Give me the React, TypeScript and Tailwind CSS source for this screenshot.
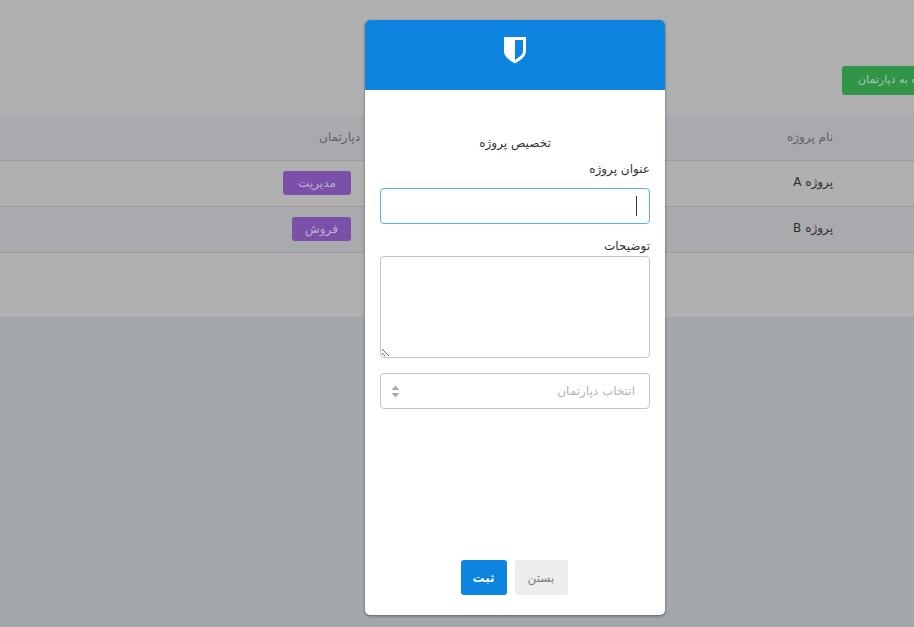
export default function App() {
  const rows = [
    { name: "پروژه A", dept: "مدیریت", bg: "bg-[#b0b0b0]", pad: "w-[68px]" },
    { name: "پروژه B", dept: "فروش", bg: "bg-[#a9aaae]", pad: "w-[59px]" },
  ];
  return (
    <div dir="rtl" className="relative h-[627px] w-[914px] overflow-hidden bg-[#a3a6aa] font-['DejaVu_Sans',sans-serif] text-[12px]">
      <div dir="ltr" className="h-[317px] bg-[#b0b0b0]">
        <div className="h-[115px] pt-[66px]">
          <button className="ml-[842px] flex h-[29px] w-max items-center whitespace-nowrap rounded-[3px] bg-[#319447] px-4 text-[11px] text-[#a5c9ad]">
            افزودن پروژه به دپارتمان
          </button>
        </div>
        <div dir="rtl">
          <div className="grid h-[46px] grid-cols-[473px_1fr] items-center border-b border-[#9c9c9c] bg-[#a9aaae] pb-[2px] text-[#5f5f62]">
            <div className="pr-[81px]">نام پروژه</div>
            <div className="pr-[81px]">دپارتمان</div>
          </div>
          {rows.map((r) => (
            <div key={r.name} className={`grid h-[46px] grid-cols-[473px_1fr] items-center border-b border-[#9c9c9c] ${r.bg} text-[#2e2e2e]`}>
              <div className="pb-[3px] pr-[81px]">{r.name}</div>
              <div className="pb-[2px] pr-[90px]">
                <span className={`inline-flex h-[24px] items-center justify-center rounded-[3px] bg-[#7b50a8] text-[12px] text-[#bcaed0] ${r.pad}`}>{r.dept}</span>
              </div>
            </div>
          ))}
        </div>
      </div>

      <div className="absolute inset-0 flex justify-center pl-[116px] pt-[20px]">
        <div className="flex h-[595px] w-[300px] flex-col overflow-hidden rounded-[5px] bg-white shadow-[0_1px_3px_rgba(0,0,0,0.45)]">
          <div className="flex h-[70px] shrink-0 justify-center bg-[#0d84e0] pt-[17px]">
            <svg width="24" height="27" viewBox="0 0 24 27">
              <path fillRule="evenodd" fill="#ffffff" d="M1 0H23V14.5C23 20 16 24 12 26.5C8 24 1 20 1 14.5ZM12 3V23C15 21 20 18 20 14.5V3Z" />
            </svg>
          </div>
          <div className="flex flex-1 flex-col px-[15px] text-[#333333]">
            <div className="mt-[45px] text-center leading-[16px]">تخصیص پروژه</div>
            <div className="mt-[10px] leading-[16px]">عنوان پروژه</div>
            <div className="relative mt-[11px]">
              <input className="block h-[36px] w-full rounded-[4px] border border-[#5aaef0] bg-white px-[13px] outline-none" />
              <span className="absolute right-[13px] top-[8px] h-[20px] w-px bg-[#333333]" />
            </div>
            <div className="mt-[14px] leading-[16px]">توضیحات</div>
            <textarea className="mt-[2px] block h-[102px] w-full rounded-[4px] border border-[#c4c4c4] bg-white outline-none" />
            <div className="mt-[15px] flex h-[36px] items-center justify-between rounded-[4px] border border-[#c4c4c4] pl-[10px] pr-[14px] text-[#b4b4b4]">
              <span>انتخاب دپارتمان</span>
              <svg width="9" height="13" viewBox="0 0 9 13" fill="#a8a8a8">
                <path d="M4.5 0.5L8.5 5H0.5Z" />
                <path d="M4.5 12.5L8.5 8H0.5Z" />
              </svg>
            </div>
            <div className="mt-auto mb-[20px] flex justify-center gap-2 pr-[2px]" dir="ltr">
              <button className="h-[35px] w-[46px] rounded-[3px] bg-[#0d84e0] font-bold text-white">ثبت</button>
              <button className="h-[35px] w-[53px] rounded-[3px] bg-[#ededed] text-[#7d7d7d]">بستن</button>
            </div>
          </div>
        </div>
      </div>
    </div>
  );
}
